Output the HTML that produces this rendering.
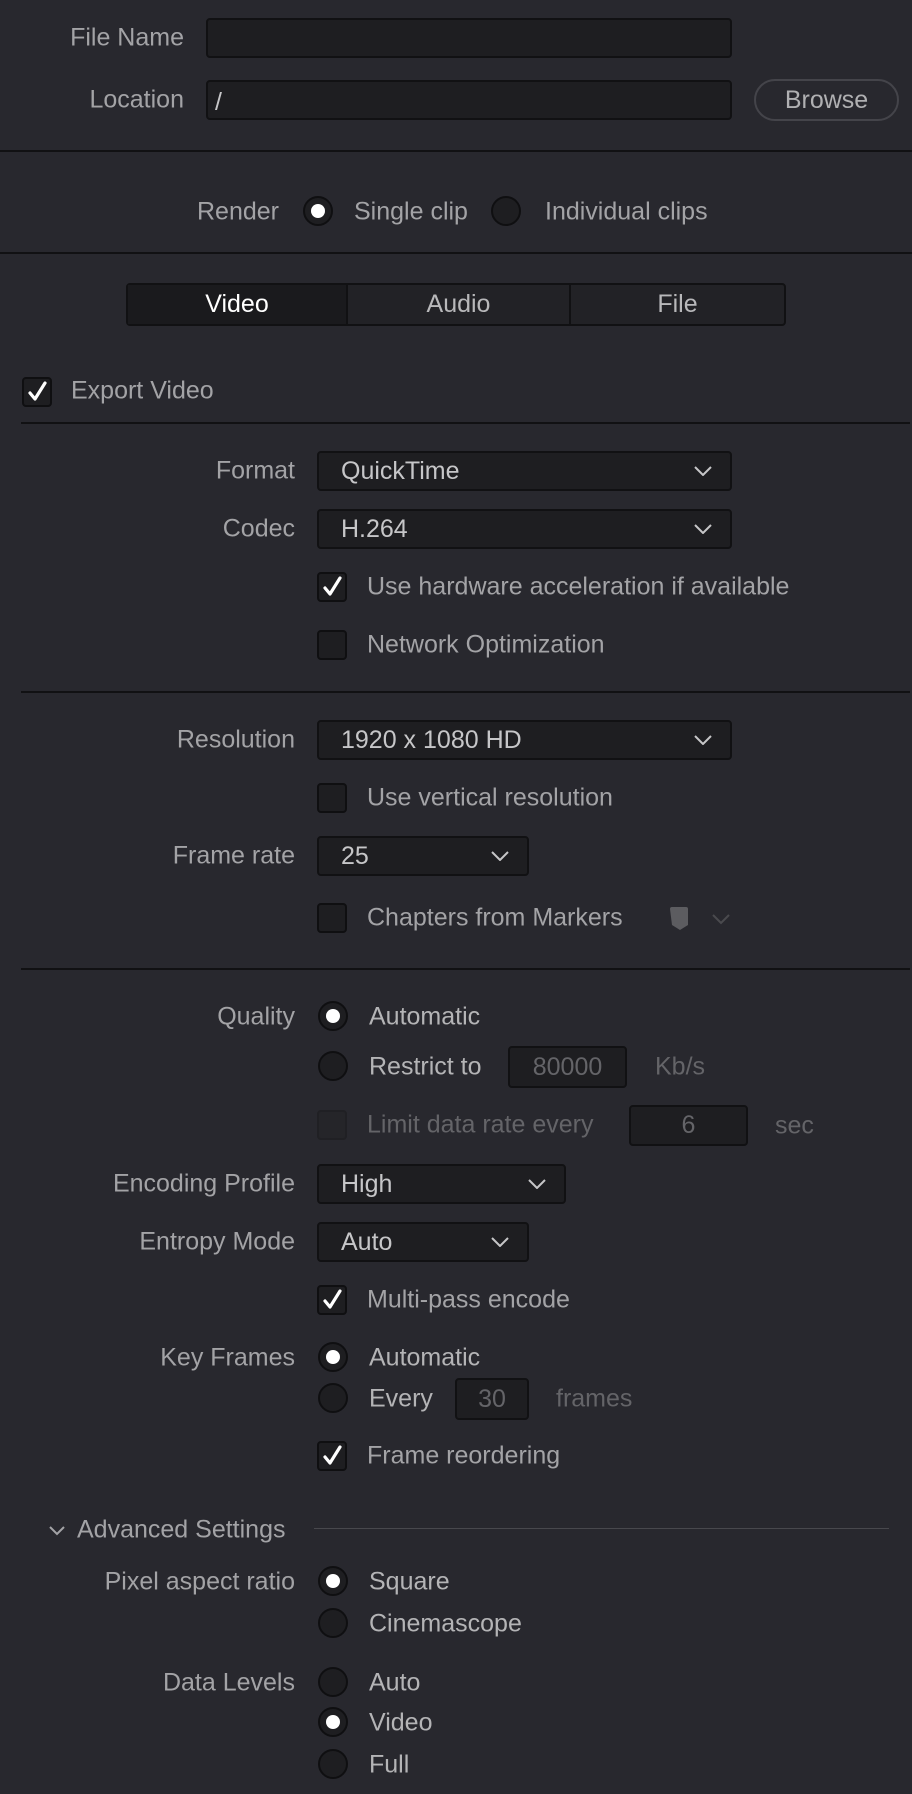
<!DOCTYPE html>
<html><head><meta charset="utf-8"><style>
body{margin:0;width:912px;height:1794px;background:#28282e;position:relative;overflow:hidden;font-family:"Liberation Sans",sans-serif;font-size:25px;color:#a3a3a6}
.a{position:absolute;white-space:nowrap;line-height:1}
.l{position:absolute;white-space:nowrap;text-align:right;line-height:1;transform:translateY(-50%)}
.t{position:absolute;white-space:nowrap;line-height:1;transform:translateY(-50%)}
.in{position:absolute;background:#1e1e21;border:2px solid #111113;border-radius:4px;box-sizing:border-box}
.sep{position:absolute;height:2px;background:#111113}
.dd{position:absolute;background:#1e1e21;border:2px solid #111113;border-radius:4px;box-sizing:border-box;color:#c6c6c8;padding-left:22px;display:flex;align-items:center}
.dd svg{position:absolute;right:18px;top:50%;margin-top:-5px}
.cb{position:absolute;width:30px;height:30px;background:#1e1e21;border:2px solid #0f0f11;border-radius:4px;box-sizing:border-box;transform:translateY(-50%)}
.rd{position:absolute;width:30px;height:30px;border-radius:50%;background:#1e1e21;border:2px solid #0f0f11;box-sizing:border-box;transform:translate(-50%,-50%)}
.rd.on::after{content:"";position:absolute;left:6px;top:6px;width:14px;height:14px;border-radius:50%;background:#fff}
.v{color:#c6c6c8}
.d{color:#646468}
.b{color:#b4b4b6}
</style></head><body>
<div class="l" style="right:728px;top:38px">File Name</div>
<div class="in" style="left:206px;top:18px;width:526px;height:40px"></div>
<div class="l" style="right:728px;top:100px">Location</div>
<div class="in v" style="left:206px;top:80px;width:526px;height:40px;padding:6px 0 0 7px">/</div>
<div class="a" style="left:754px;top:79px;width:145px;height:42px;border:2px solid #44444a;border-radius:21px;box-sizing:border-box;text-align:center;line-height:38px;color:#b0b0b2">Browse</div>
<div class="sep" style="left:0;width:912px;top:150px"></div>

<div class="t" style="left:197px;top:212px">Render</div>
<div class="rd on" style="left:318px;top:211px"></div>
<div class="t" style="left:354px;top:212px">Single clip</div>
<div class="rd" style="left:506px;top:211px"></div>
<div class="t" style="left:545px;top:212px">Individual clips</div>
<div class="sep" style="left:0;width:912px;top:252px"></div>

<div class="a" style="left:126px;top:283px;width:660px;height:43px;border:2px solid #111113;border-radius:4px;box-sizing:border-box;background:#222226;display:flex">
<div style="width:218px;background:#1a1a1d;color:#fff;text-align:center;line-height:39px">Video</div>
<div style="width:2px;background:#111113"></div>
<div style="width:221px;text-align:center;line-height:39px;color:#b8b8ba">Audio</div>
<div style="width:2px;background:#111113"></div>
<div style="flex:1;text-align:center;line-height:39px;color:#b8b8ba">File</div>
</div>

<svg style="position:absolute;left:0;top:0" width="912" height="1794">
<defs><path id="ck" d="M-7 1 L-2 7 L8 -9" fill="none" stroke="#fff" stroke-width="3.2" stroke-linecap="round" stroke-linejoin="round"/></defs>
</svg>

<div class="cb" style="left:22px;top:392px"></div>
<svg class="a" style="left:22px;top:377px" width="30" height="30"><use href="#ck" x="15" y="15"/></svg>
<div class="t" style="left:71px;top:391px">Export Video</div>
<div class="sep" style="left:21px;width:889px;top:422px"></div>

<div class="l" style="right:617px;top:471px">Format</div>
<div class="dd" style="left:317px;top:451px;width:415px;height:40px">QuickTime<svg width="18" height="10"><path d="M1 1l8 8 8-8" fill="none" stroke="#c6c6c8" stroke-width="2"/></svg></div>
<div class="l" style="right:617px;top:529px">Codec</div>
<div class="dd" style="left:317px;top:509px;width:415px;height:40px">H.264<svg width="18" height="10"><path d="M1 1l8 8 8-8" fill="none" stroke="#c6c6c8" stroke-width="2"/></svg></div>
<div class="cb" style="left:317px;top:587px"></div>
<svg class="a" style="left:317px;top:572px" width="30" height="30"><use href="#ck" x="15" y="15"/></svg>
<div class="t" style="left:367px;top:587px">Use hardware acceleration if available</div>
<div class="cb" style="left:317px;top:645px"></div>
<div class="t" style="left:367px;top:645px">Network Optimization</div>
<div class="sep" style="left:21px;width:889px;top:691px"></div>

<div class="l" style="right:617px;top:740px">Resolution</div>
<div class="dd" style="left:317px;top:720px;width:415px;height:40px">1920 x 1080 HD<svg width="18" height="10"><path d="M1 1l8 8 8-8" fill="none" stroke="#c6c6c8" stroke-width="2"/></svg></div>
<div class="cb" style="left:317px;top:798px"></div>
<div class="t" style="left:367px;top:798px">Use vertical resolution</div>
<div class="l" style="right:617px;top:856px">Frame rate</div>
<div class="dd" style="left:317px;top:836px;width:212px;height:40px">25<svg width="18" height="10"><path d="M1 1l8 8 8-8" fill="none" stroke="#c6c6c8" stroke-width="2"/></svg></div>
<div class="cb" style="left:317px;top:918px"></div>
<div class="t" style="left:367px;top:918px">Chapters from Markers</div>
<svg class="a" style="left:668px;top:906px" width="24" height="30"><path d="M2 3q0-2 2-2h14q2 0 2 2v16l-8 5-8-5z" fill="#5c5c60"/></svg>
<svg class="a" style="left:711px;top:913px" width="20" height="12"><path d="M2 2l8 8 8-8" fill="none" stroke="#4a4a4e" stroke-width="2"/></svg>
<div class="sep" style="left:21px;width:889px;top:968px"></div>

<div class="l" style="right:617px;top:1017px">Quality</div>
<div class="rd on" style="left:333px;top:1016px"></div>
<div class="t b" style="left:369px;top:1017px">Automatic</div>
<div class="rd" style="left:333px;top:1066px"></div>
<div class="t b" style="left:369px;top:1067px">Restrict to</div>
<div class="in d" style="left:508px;top:1046px;width:119px;height:42px;text-align:center;line-height:38px">80000</div>
<div class="t d" style="left:655px;top:1067px">Kb/s</div>
<div class="cb" style="left:317px;top:1125px;border-color:#202024;background:#252529"></div>
<div class="t d" style="left:367px;top:1125px">Limit data rate every</div>
<div class="in d" style="left:629px;top:1105px;width:119px;height:41px;text-align:center;line-height:37px">6</div>
<div class="t d" style="left:775px;top:1126px">sec</div>

<div class="l" style="right:617px;top:1184px">Encoding Profile</div>
<div class="dd" style="left:317px;top:1164px;width:249px;height:40px">High<svg width="18" height="10"><path d="M1 1l8 8 8-8" fill="none" stroke="#c6c6c8" stroke-width="2"/></svg></div>
<div class="l" style="right:617px;top:1242px">Entropy Mode</div>
<div class="dd" style="left:317px;top:1222px;width:212px;height:40px">Auto<svg width="18" height="10"><path d="M1 1l8 8 8-8" fill="none" stroke="#c6c6c8" stroke-width="2"/></svg></div>
<div class="cb" style="left:317px;top:1300px"></div>
<svg class="a" style="left:317px;top:1285px" width="30" height="30"><use href="#ck" x="15" y="15"/></svg>
<div class="t" style="left:367px;top:1300px">Multi-pass encode</div>

<div class="l" style="right:617px;top:1358px">Key Frames</div>
<div class="rd on" style="left:333px;top:1357px"></div>
<div class="t b" style="left:369px;top:1358px">Automatic</div>
<div class="rd" style="left:333px;top:1398px"></div>
<div class="t b" style="left:369px;top:1399px">Every</div>
<div class="in d" style="left:455px;top:1378px;width:74px;height:42px;text-align:center;line-height:38px">30</div>
<div class="t d" style="left:556px;top:1399px">frames</div>
<div class="cb" style="left:317px;top:1456px"></div>
<svg class="a" style="left:317px;top:1441px" width="30" height="30"><use href="#ck" x="15" y="15"/></svg>
<div class="t" style="left:367px;top:1456px">Frame reordering</div>

<svg class="a" style="left:48px;top:1525px" width="18" height="11"><path d="M2 2l7 7 7-7" fill="none" stroke="#a3a3a6" stroke-width="2"/></svg>
<div class="t" style="left:77px;top:1530px">Advanced Settings</div>
<div class="a" style="left:314px;top:1528px;width:575px;height:1px;background:#48484d"></div>

<div class="l" style="right:617px;top:1582px">Pixel aspect ratio</div>
<div class="rd on" style="left:333px;top:1581px"></div>
<div class="t b" style="left:369px;top:1582px">Square</div>
<div class="rd" style="left:333px;top:1623px"></div>
<div class="t b" style="left:369px;top:1624px">Cinemascope</div>
<div class="l" style="right:617px;top:1683px">Data Levels</div>
<div class="rd" style="left:333px;top:1682px"></div>
<div class="t b" style="left:369px;top:1683px">Auto</div>
<div class="rd on" style="left:333px;top:1722px"></div>
<div class="t b" style="left:369px;top:1723px">Video</div>
<div class="rd" style="left:333px;top:1764px"></div>
<div class="t b" style="left:369px;top:1765px">Full</div>
</body></html>
